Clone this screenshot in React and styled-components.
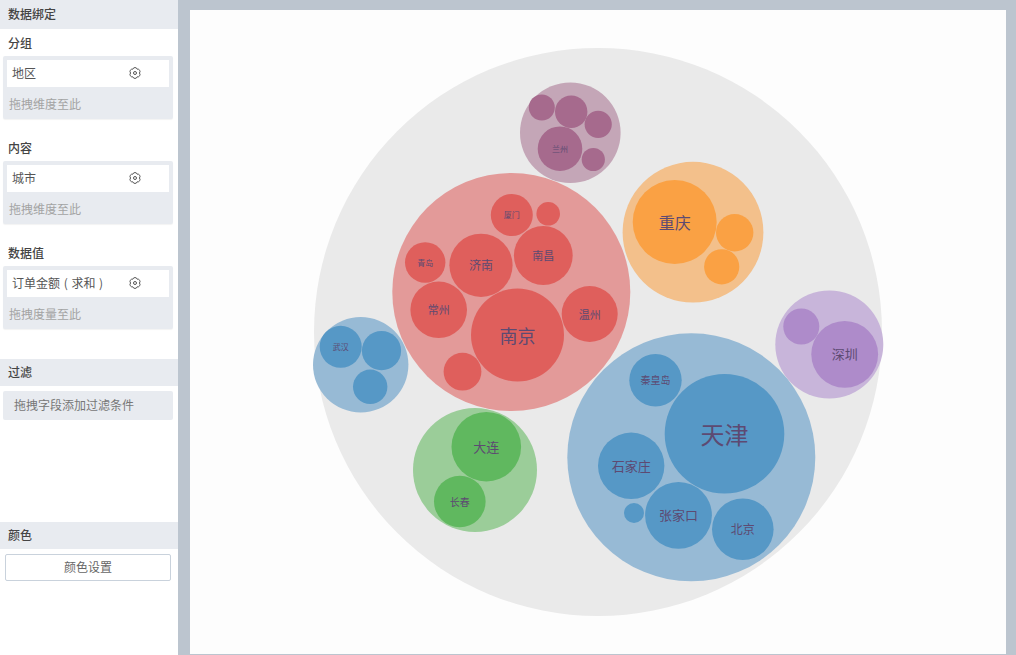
import React from 'react';
import styled, { createGlobalStyle } from 'styled-components';

const GROUPS = [
  {
    parent: [511.3, 292, 119], fill: '#e39a99', child: '#df5f5c',
    items: [
      [517.5, 335, 46.5, '南京', 18], [481, 265.3, 31.6, '济南', 12], [543.3, 255.5, 29.4, '南昌', 11],
      [589.7, 314, 28, '温州', 11], [438.7, 309.8, 28.3, '常州', 11], [425.2, 262.5, 20.2, '青岛', 8],
      [511.8, 215, 21, '厦门', 8], [548.2, 213.8, 11.8], [462.5, 371.7, 18.9],
    ],
  },
  {
    parent: [691.3, 457.3, 124], fill: '#97bad5', child: '#5698c6',
    items: [
      [724.5, 433.8, 59.8, '天津', 24], [655.5, 380.3, 26.2, '秦皇岛', 10], [631.2, 465.8, 33.2, '石家庄', 13],
      [678.5, 515.3, 33.4, '张家口', 13], [742.8, 529.2, 30.8, '北京', 12], [634, 513, 10],
    ],
  },
  {
    parent: [360.7, 364.8, 47.7], fill: '#97bad5', child: '#5698c6',
    items: [[340.7, 346.8, 21, '武汉', 8], [381.5, 350.7, 19.6], [370.2, 386.8, 17.2]],
  },
  {
    parent: [475, 470, 62], fill: '#9bcd99', child: '#60b85f',
    items: [[486.3, 446.7, 34.8, '大连', 13], [459.8, 501.5, 25.8, '长春', 10]],
  },
  {
    parent: [570.3, 132.7, 50.3], fill: '#c4a6b7', child: '#a66a8d',
    items: [
      [560, 148.7, 22.3, '兰州', 8], [541.8, 107.5, 13], [571.2, 111.7, 16.2],
      [598.2, 124.3, 13.6], [593.3, 159.5, 11.6],
    ],
  },
  {
    parent: [693, 232.2, 70.4], fill: '#f3c08b', child: '#faa144',
    items: [[674.7, 222, 42, '重庆', 16], [734.7, 232.7, 18.7], [721.7, 266.8, 17.6]],
  },
  {
    parent: [829.3, 344.5, 54], fill: '#c8b5da', child: '#ae8bca',
    items: [[844.7, 354.3, 33.4, '深圳', 13], [801.3, 326.5, 18]],
  },
];

const BINDINGS = [
  { title: '分组', field: '地区', hint: '拖拽维度至此' },
  { title: '内容', field: '城市', hint: '拖拽维度至此' },
  { title: '数据值', field: '订单金额 ( 求和 )', hint: '拖拽度量至此' },
];

const GlobalStyle = createGlobalStyle`
  html, body { margin: 0; padding: 0; height: 100%; }
  body { font-family: "Noto Sans CJK SC", "Liberation Sans", sans-serif; overflow: hidden; }
`;

const Page = styled.div`
  display: flex;
  width: 1016px;
  height: 655px;
  background: #bcc5cf;
`;

const Sidebar = styled.aside`
  width: 178px;
  flex-shrink: 0;
  display: flex;
  flex-direction: column;
  background: #fff;
`;

const Header = styled.div`
  height: ${({ $h }) => $h || 27}px;
  margin-top: ${({ $top }) => $top || 0}px;
  padding: 0 0 2px 8px;
  box-sizing: border-box;
  display: flex;
  align-items: center;
  flex-shrink: 0;
  background: #e8ebf0;
  color: #444;
  font-size: 12px;
  font-weight: 500;
`;

const Group = styled.section`
  height: ${({ $h }) => $h}px;
  flex-shrink: 0;
`;

const GroupTitle = styled.div`
  height: 27px;
  padding: 0 0 1px 8px;
  box-sizing: border-box;
  display: flex;
  align-items: center;
  color: #444;
  font-size: 12px;
  font-weight: 500;
`;

const DropZone = styled.div`
  width: 170px;
  height: 63px;
  margin-left: 3px;
  padding: 4px 4px 0;
  box-sizing: border-box;
  background: #e8ebf0;
  border-radius: 2px;
  box-shadow: 0 1px 1px rgba(0, 0, 0, 0.05);
`;

const Field = styled.div`
  height: 27px;
  padding: 0 5px 2px;
  box-sizing: border-box;
  display: flex;
  align-items: center;
  position: relative;
  background: #fff;
  color: #555;
  font-size: 12px;
  white-space: pre;
  word-spacing: 1px;
`;

const GearIcon = styled.svg`
  position: absolute;
  left: 121.5px;
  top: 6.5px;
  width: 12px;
  height: 12px;
  fill: none;
  stroke: #555;
  stroke-width: 1;
`;

const Hint = styled.div`
  height: 34px;
  padding: 0 0 2px 2px;
  box-sizing: border-box;
  display: flex;
  align-items: center;
  color: #a3a3a3;
  font-size: 12px;
`;

const FilterZone = styled.div`
  width: 170px;
  height: 29px;
  margin: 5px 0 0 3px;
  padding: 0 0 2px 11px;
  box-sizing: border-box;
  display: flex;
  align-items: center;
  background: #e8ebf0;
  border-radius: 2px;
  color: #777;
  font-size: 12px;
`;

const ColorButton = styled.button`
  width: 166px;
  height: 27px;
  margin: 5px 0 0 5px;
  padding: 0 0 2px;
  box-sizing: border-box;
  background: #fff;
  border: 1px solid #c9d2dc;
  border-radius: 2px;
  color: #666;
  font-family: inherit;
  font-size: 12px;
`;

const Main = styled.main`
  flex: 1;
  padding: 10px 10px 1px 12px;
  display: flex;
`;

const Canvas = styled.div`
  flex: 1;
  background: #fdfdfd;
`;

const Chart = styled.svg`
  display: block;
  width: 100%;
  height: 100%;
`;

const Label = styled.text`
  fill: #5d4a72;
  font-size: ${({ $size }) => $size}px;
  text-anchor: middle;
  dominant-baseline: central;
`;

const Gear = () => (
  <GearIcon viewBox="0 0 12 12">
    <path d="M8.2 2.19A2.3 2.3 0 0 1 10.4 6A2.3 2.3 0 0 1 8.2 9.81A2.3 2.3 0 0 1 3.8 9.81A2.3 2.3 0 0 1 1.6 6A2.3 2.3 0 0 1 3.8 2.19A2.3 2.3 0 0 1 8.2 2.19z" />
    <circle cx="6" cy="6" r="1.5" />
  </GearIcon>
);

const App = () => (
  <Page>
    <GlobalStyle />
    <Sidebar>
      <Header $h={29}>数据绑定</Header>
      {BINDINGS.map((b) => (
        <Group key={b.title} $h={105}>
          <GroupTitle>{b.title}</GroupTitle>
          <DropZone>
            <Field>
              {b.field}
              <Gear />
            </Field>
            <Hint>{b.hint}</Hint>
          </DropZone>
        </Group>
      ))}
      <Header $top={15}>过滤</Header>
      <FilterZone>拖拽字段添加过滤条件</FilterZone>
      <Header $top={102}>颜色</Header>
      <ColorButton>颜色设置</ColorButton>
    </Sidebar>
    <Main>
      <Canvas>
        <Chart viewBox="190 10 816 644">
          <circle cx={598} cy={332} r={284} fill="#eaeaea" />
          {GROUPS.map((g) => (
            <g key={g.parent.join()}>
              <circle cx={g.parent[0]} cy={g.parent[1]} r={g.parent[2]} fill={g.fill} />
              {g.items.map(([x, y, r, name, size]) => (
                <g key={`${x}-${y}`}>
                  <circle cx={x} cy={y} r={r} fill={g.child} />
                  {name && <Label x={x} y={y - 0.5} $size={size}>{name}</Label>}
                </g>
              ))}
            </g>
          ))}
        </Chart>
      </Canvas>
    </Main>
  </Page>
);

export default App;
